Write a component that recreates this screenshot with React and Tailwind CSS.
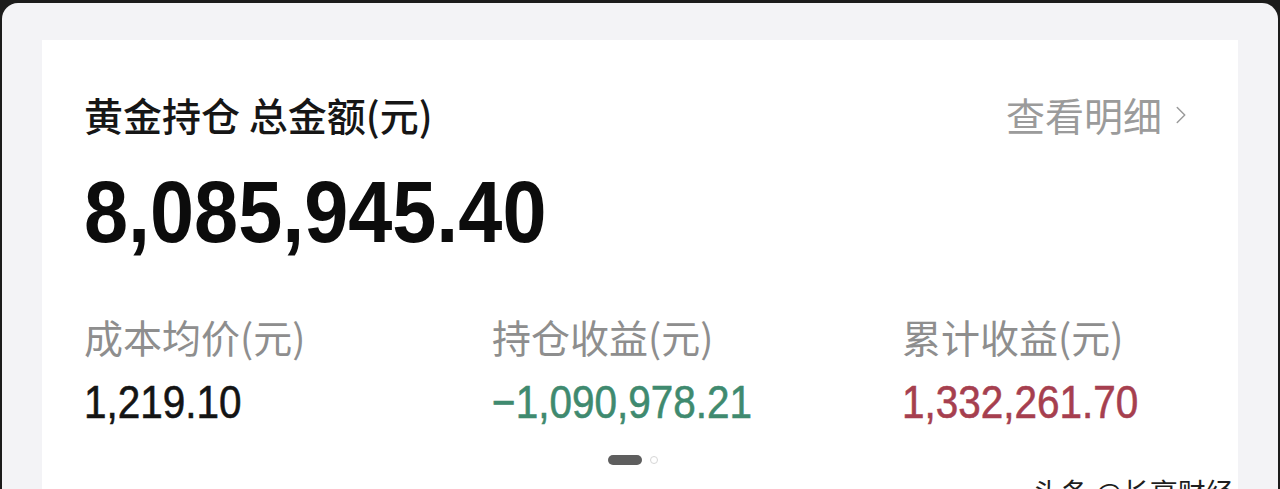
import { ChevronRight } from 'lucide-react';

const cjk = "font-['Noto_Sans_CJK_SC','Noto_Sans',sans-serif]";
const num = "font-['Liberation_Sans',sans-serif]";

const stats = [
  { label: '成本均价(元)', value: '1,219.10', color: 'text-[#141414]' },
  { label: '持仓收益(元)', value: '−1,090,978.21', color: 'text-[#3f8a6f]' },
  { label: '累计收益(元)', value: '1,332,261.70', color: 'text-[#a63f4f]' },
];

export default function App() {
  return (
    <div className="h-[489px] w-[1280px] overflow-hidden bg-[#1b1b1b] pt-[3px] px-[2px]">
      <div className="relative h-full rounded-t-[16px] bg-[#f3f3f6] px-[40px] pt-[37px]">
        <div className="h-full bg-white pl-[42px] pr-[42px] pt-[55px]">
          <div className="flex items-start justify-between">
            <h1 className={`${cjk} text-[39px] font-medium leading-none text-[#161616]`}>黄金持仓 总金额(元)</h1>
            <div className={`${cjk} flex items-center text-[39px] leading-none text-[#9b9b9b]`}>
              查看明细
              <ChevronRight className="ml-[4px] h-[30px] w-[30px]" strokeWidth={1.2} />
            </div>
          </div>

          <div className={`${num} mt-[34px] origin-left scale-x-[0.9] text-[88px] font-bold leading-none text-[#0c0c0c]`}>
            8,085,945.40
          </div>

          <div className="mt-[61px] grid grid-cols-[408px_410px_1fr]">
            {stats.map((s) => (
              <div key={s.label}>
                <div className={`${cjk} text-[39px] leading-none text-[#8e8e8e]`}>{s.label}</div>
                <div className={`${num} mt-[23px] origin-left scale-x-[0.88] text-[46px] leading-none [-webkit-text-stroke:0.6px_currentColor] ${s.color}`}>
                  {s.value}
                </div>
              </div>
            ))}
          </div>

          <div className="mt-[30px] flex items-center justify-center gap-[8px] pr-[14px]">
            <span className="h-[10px] w-[34px] rounded-full bg-[#5e5e5e]" />
            <span className="h-[8px] w-[8px] rounded-full border border-[#d6d6d6]" />
          </div>
        </div>

        <div
          className={`${cjk} absolute left-[1031px] top-[475px] whitespace-nowrap text-[28px] leading-none text-[#1e1e1e] [text-shadow:0_0_2px_#fff,0_0_2px_#fff]`}
        >
          头条 @长亭财经
        </div>
      </div>
    </div>
  );
}
